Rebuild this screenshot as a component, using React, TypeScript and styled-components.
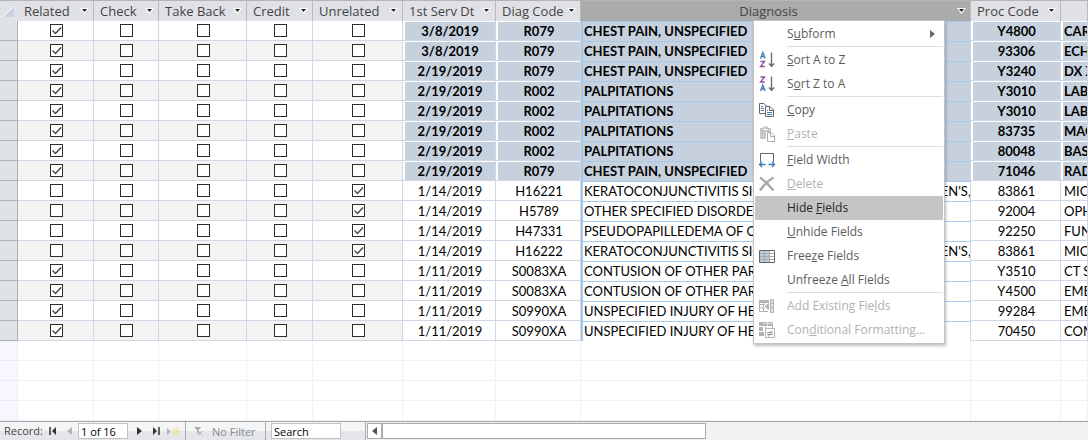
import React from 'react';
import styled, { createGlobalStyle } from 'styled-components';

const Global = createGlobalStyle`
  * { box-sizing: border-box; }
  body { margin: 0; background: #fff; font-family: "Open Sans", "Noto Sans", sans-serif; font-size: 12px; }
  button, input { font: inherit; color: inherit; margin: 0; padding: 0; border: 0; background: none; }
`;

const Page = styled.div`
  display: flex;
  flex-direction: column;
  min-height: 100vh;
  overflow: hidden;
`;

const SheetArea = styled.main`
  flex: 1;
  min-width: 0;
`;

const Sheet = styled.table`
  width: 100%;
  table-layout: fixed;
  border-collapse: separate;
  border-spacing: 0;
`;

const Col = styled.col<{ $w?: number }>`
  width: ${(p) => (p.$w ? `${p.$w}px` : 'auto')};
`;

const Corner = styled.th`
  height: 21px;
  padding: 0;
  border-top: 1px solid #b4b4b8;
  background: #dfe3e8;
  svg { display: block; margin-left: 3px; }
`;

const HeadCell = styled.th<{ $active?: boolean }>`
  position: relative;
  height: 21px;
  padding: 0;
  border-top: 1px solid #b4b4b8;
  border-right: 1px solid #b9babe;
  background: ${(p) => (p.$active ? '#ababab' : '#dfe1e7')};
  color: #444;
  font-size: 13px;
  font-weight: 400;
  line-height: 20px;
`;

const HeadInner = styled.div<{ $center?: boolean }>`
  display: flex;
  align-items: center;
  height: 20px;
  padding: 0 3px 0 ${(p) => (p.$center ? 0 : 6)}px;
  white-space: nowrap;
`;

const HeadLabel = styled.span<{ $center?: boolean }>`
  flex: 1;
  text-align: ${(p) => (p.$center ? 'center' : 'left')};
`;

const DropButton = styled.button`
  display: flex;
  align-items: center;
  justify-content: center;
  width: 11px;
  height: 16px;
`;

const RowHead = styled.th<{ $empty?: boolean }>`
  height: 20px;
  padding: 0;
  border-right: 1px solid ${(p) => (p.$empty ? '#ececf4' : '#b0b0b4')};
  border-bottom: 1px solid ${(p) => (p.$empty ? '#ececf4' : '#b0b0b4')};
  background: ${(p) => (p.$empty ? '#f7f7ff' : '#dfe3e8')};
`;

const Cell = styled.td<{ $alt?: boolean }>`
  height: 20px;
  padding: 0 0 0 1px;
  border-right: 1px solid #cfd6e5;
  border-bottom: 1px solid #cfd6e5;
  background: ${(p) => (p.$alt ? '#f3f3f3' : '#fff')};
  line-height: 0;
  text-align: center;
`;

const TextCell = styled(Cell)<{ $marked?: boolean; $left?: boolean }>`
  padding: 1px 0 0 2px;
  background: #fff;
  color: #000;
  font-family: Lato, "Liberation Sans", sans-serif;
  font-size: 13px;
  font-weight: ${(p) => (p.$marked ? 700 : 400)};
  line-height: 18px;
  text-align: ${(p) => (p.$left ? 'left' : 'center')};
`;

const Fill = styled.div<{ $marked?: boolean; $left?: boolean }>`
  height: 18px;
  padding-left: ${(p) => (p.$left ? 1 : 0)}px;
  overflow: hidden;
  white-space: nowrap;
  background: ${(p) => (p.$marked ? '#c6d1dd' : '#fff')};
`;

const ActiveCell = styled(TextCell)`
  padding: 0;
  border-left: 2px solid #9fc8ea;
  border-top: 1px solid #a6cbea;
  border-bottom: 0;
  ${Fill} { height: 19px; }
`;

const EmptyCell = styled.td`
  height: 20px;
  padding: 0;
  border-right: 1px solid #f0f0f6;
  border-bottom: 1px solid #f0f0f6;
`;

const Tick = styled.input`
  appearance: none;
  display: inline-block;
  width: 13px;
  height: 13px;
  border: 1px solid #2b2b2b;
  background: #fff;
  &:checked {
    background: #fff url("data:image/svg+xml,%3Csvg xmlns='http://www.w3.org/2000/svg' width='11' height='11'%3E%3Cpath d='M1.5 5.5L4.5 8.5L10 2.5' fill='none' stroke='%23444' stroke-width='1.4'/%3E%3C/svg%3E") no-repeat;
  }
`;

const Menu = styled.div`
  position: absolute;
  z-index: 2;
  top: 19px;
  left: 172px;
  width: 192px;
  padding: 1px;
  border: 1px solid #c3c3c3;
  background: #fff;
  box-shadow: 1px 2px 3px rgba(0, 0, 0, 0.25);
  text-align: left;
`;

const MenuItem = styled.button<{ $hot?: boolean }>`
  display: flex;
  align-items: center;
  width: 100%;
  height: 24px;
  background: ${(p) => (p.$hot ? '#c5c5c5' : 'transparent')};
  color: ${(p) => (p.$hot ? '#262626' : '#5c5c5c')};
  font-size: 12px;
  line-height: 24px;
  text-align: left;
  white-space: nowrap;
  &:disabled { color: #b1b1b1; }
`;

const MenuIcon = styled.span`
  display: flex;
  width: 32px;
  padding-left: 3px;
  svg { display: block; }
`;

const MenuText = styled.span`
  flex: 1;
`;

const SubArrow = styled.svg`
  margin-right: 8px;
`;

const Divider = styled.hr`
  height: 1px;
  margin: 0 0 1px 32px;
  border: 0;
  background: #dcdfe2;
`;

const NavBar = styled.footer`
  display: flex;
  align-items: stretch;
  height: 19px;
  border-top: 1px solid #a5a7ac;
  background: #eff0f2;
  color: #444;
  font-size: 11px;
`;

const NavGroup = styled.div`
  display: flex;
  align-items: center;
  border-right: 1px solid #a9abb0;
  background: linear-gradient(#f4f5f6 0 50%, #e4e6ea 50% 100%);
`;

const RecordGroup = styled(NavGroup)`
  width: 186px;
  padding-left: 4px;
`;

const FilterGroup = styled(NavGroup)`
  width: 80px;
  padding-left: 8px;
`;

const SearchGroup = styled(NavGroup)`
  width: 100px;
  padding-left: 5px;
`;

const RecordLabel = styled.label`
  width: 42px;
  line-height: 16px;
`;

const NavButton = styled.button<{ $w: number }>`
  display: flex;
  align-items: center;
  justify-content: center;
  width: ${(p) => p.$w}px;
  height: 16px;
`;

const FilterButton = styled.button`
  display: flex;
  align-items: center;
  gap: 9px;
  white-space: nowrap;
  &:disabled { color: #8a8a8a; }
`;

const NavInput = styled.input<{ $w: number }>`
  && {
    width: ${(p) => p.$w}px;
    height: 16px;
    padding-left: 2px;
    border: 1px solid #c3c3c3;
    background: #fff;
    color: #000;
    line-height: 14px;
  }
  &::placeholder { color: #000; opacity: 1; }
`;

const ScrollBar = styled.div`
  display: flex;
  flex: 1;
  margin: 1px 0;
  padding-left: 1px;
  background: #f2f2f2;
`;

const ScrollButton = styled.button`
  && {
    display: flex;
    align-items: center;
    justify-content: center;
    width: 15px;
    border: 1px solid #ababab;
    background: #fff;
  }
`;

const Thumb = styled.div`
  width: 46%;
  max-width: 324px;
  border: 1px solid #ababab;
  background: #fff;
`;

const checkColumns = ['Related', 'Check', 'Take Back', 'Credit', 'Unrelated'];

type Row = [number, string, string, string, string, string];

const rows: Row[] = [
  [0, '3/8/2019', 'R079', 'CHEST PAIN, UNSPECIFIED', 'Y4800', 'CARDIO'],
  [0, '3/8/2019', 'R079', 'CHEST PAIN, UNSPECIFIED', '93306', 'ECHO'],
  [0, '2/19/2019', 'R079', 'CHEST PAIN, UNSPECIFIED', 'Y3240', 'DX XRAY'],
  [0, '2/19/2019', 'R002', 'PALPITATIONS', 'Y3010', 'LAB,'],
  [0, '2/19/2019', 'R002', 'PALPITATIONS', 'Y3010', 'LAB,'],
  [0, '2/19/2019', 'R002', 'PALPITATIONS', '83735', 'MAGN'],
  [0, '2/19/2019', 'R002', 'PALPITATIONS', '80048', 'BASIC'],
  [0, '2/19/2019', 'R079', 'CHEST PAIN, UNSPECIFIED', '71046', 'RADEX'],
  [4, '1/14/2019', 'H16221', "KERATOCONJUNCTIVITIS SICCA, NOT SPECIFIED AS SJOGREN'S, RIGHT EYE", '83861', 'MICRO'],
  [4, '1/14/2019', 'H5789', 'OTHER SPECIFIED DISORDERS OF EYE', '92004', 'OPHTH'],
  [4, '1/14/2019', 'H47331', 'PSEUDOPAPILLEDEMA OF OPTIC DISC', '92250', 'FUNDUS'],
  [4, '1/14/2019', 'H16222', "KERATOCONJUNCTIVITIS SICCA, NOT SPECIFIED AS SJOGREN'S, LEFT EYE", '83861', 'MICRO'],
  [0, '1/11/2019', 'S0083XA', 'CONTUSION OF OTHER PART OF HEAD', 'Y3510', 'CT SCAN'],
  [0, '1/11/2019', 'S0083XA', 'CONTUSION OF OTHER PART OF HEAD', 'Y4500', 'EMERG'],
  [0, '1/11/2019', 'S0990XA', 'UNSPECIFIED INJURY OF HEAD', '99284', 'EMERG'],
  [0, '1/11/2019', 'S0990XA', 'UNSPECIFIED INJURY OF HEAD', '70450', 'COMPUTED'],
];

const SortIcon = ({ desc }: { desc?: boolean }) => {
  const a = (y: number) => <path d={`M2.5 ${y + 6}L4.8 ${y}L7.1 ${y + 6}M3.2 ${y + 4}H6.4`} stroke="#3d7cb8" strokeWidth="1.3" />;
  const z = (y: number) => <path d={`M2.5 ${y + 0.5}H6.5L2.5 ${y + 5.5}H6.8`} stroke="#8b4fa8" strokeWidth="1.3" />;
  return (
    <svg width="18" height="18" viewBox="0 0 18 18" fill="none">
      {desc ? z(1.5) : a(1.5)}
      {desc ? a(10) : z(10)}
      <path d="M13.5 1.5V15M11 12.5L13.5 15.2L16 12.5" stroke="#666" strokeWidth="1.3" />
    </svg>
  );
};

const CopyIcon = () => (
  <svg width="18" height="18" viewBox="0 0 18 18" fill="none" stroke="#666">
    <path d="M7 12.5H1.5V2.5H6L8.5 5" />
    <path d="M7.5 5.5H12L15.5 9V15.5H7.5Z" fill="#fff" />
    <path d="M11.5 5.5V9.5H15.5" />
    <path d="M3 5.5H5M3 7.5H6M3 9.5H6M9 9.5H10M9 11.5H14M9 13.5H14" stroke="#3d7cb8" />
  </svg>
);

const PasteIcon = () => (
  <svg width="18" height="18" viewBox="0 0 18 18" fill="none">
    <path d="M2 3H5V1.5H10V3H13V7H8V14H2Z" fill="#c6c6c6" />
    <path d="M5.5 4.5H9.5" stroke="#fff" />
    <path d="M9.5 7.5H13L16.5 11V16.5H9.5Z" fill="#fff" stroke="#aaa" />
    <path d="M12.5 7.5V11.5H16.5" stroke="#aaa" />
  </svg>
);

const WidthIcon = () => (
  <svg width="18" height="18" viewBox="0 0 18 18" fill="none">
    <path d="M2.5 11V2.5H15.5V11" stroke="#666" />
    <path d="M1.5 13.5H7.5M4 11L1.5 13.5L4 16M10.5 13.5H16.5M14 11L16.5 13.5L14 16" stroke="#3d7cb8" strokeWidth="1.3" />
  </svg>
);

const DeleteIcon = () => (
  <svg width="18" height="18" viewBox="0 0 18 18" fill="none">
    <path d="M2 2.5C7 6 12 11 15.5 15.5M15.5 2.5C9.5 6 5 11 2 15.5" stroke="#a9a9a9" strokeWidth="2.4" />
  </svg>
);

const FreezeIcon = () => (
  <svg width="18" height="18" viewBox="0 0 18 18" fill="none">
    <path d="M1.5 3.5H16.5V15.5H1.5Z" fill="#fff" />
    <path d="M2 4H11V15H2Z" fill="#b8cde4" />
    <path d="M2 6.5H16M2 9.5H16M2 12.5H16M6.5 4V15M11.5 4V15" stroke="#aaa" />
    <path d="M1.5 3.5H16.5V15.5H1.5Z" stroke="#666" />
  </svg>
);

const AddFieldsIcon = () => (
  <svg width="18" height="18" viewBox="0 0 18 18" fill="none" stroke="#b3b3b3">
    <path d="M10 14.5H1.5V3.5M1.5 7.5H7M1.5 11H7M5.5 4V14" />
    <path d="M1 3H11V6H1Z" fill="#b3b3b3" stroke="none" />
    <path d="M7 9H10.5M10.5 6.5V12.5L7.5 9.5Z" fill="#b3b3b3" />
    <path d="M12.5 2.5H15.5V15.5H12.5Z" fill="#ddd" />
    <path d="M12.5 6.5H15.5M12.5 10.5H15.5" />
  </svg>
);

const FormatIcon = () => (
  <svg width="18" height="18" viewBox="0 0 18 18" fill="none" stroke="#b3b3b3">
    <path d="M1 1H15V5H1ZM1 6H5V10H1ZM1 11H6V15H1Z" fill="#b3b3b3" stroke="none" />
    <path d="M9.5 1V5M5 2.5H15" stroke="#ddd" />
    <path d="M7.5 5.5V7.500M14.500 5V7" />
    <path d="M7.5 7.5H16.5V16.5H7.5Z" fill="#fff" />
    <path d="M9 11.5H15M9 13.5H15M13.5 9.5L10.5 15.5" stroke="#999" />
  </svg>
);

type Entry = { pre: string; key: string; post: string; icon?: React.ReactNode; off?: boolean; hot?: boolean; sub?: boolean; line?: boolean };

const entries: Entry[] = [
  { pre: 'S', key: 'u', post: 'bform', sub: true, line: true },
  { pre: '', key: 'S', post: 'ort A to Z', icon: <SortIcon /> },
  { pre: 'S', key: 'o', post: 'rt Z to A', icon: <SortIcon desc />, line: true },
  { pre: '', key: 'C', post: 'opy', icon: <CopyIcon /> },
  { pre: '', key: 'P', post: 'aste', icon: <PasteIcon />, off: true, line: true },
  { pre: '', key: 'F', post: 'ield Width', icon: <WidthIcon /> },
  { pre: '', key: 'D', post: 'elete', icon: <DeleteIcon />, off: true },
  { pre: 'Hide ', key: 'F', post: 'ields', hot: true },
  { pre: '', key: 'U', post: 'nhide Fields' },
  { pre: 'Free', key: 'z', post: 'e Fields', icon: <FreezeIcon /> },
  { pre: 'Unfreeze ', key: 'A', post: 'll Fields', line: true },
  { pre: 'Add Existing Fie', key: 'l', post: 'ds', icon: <AddFieldsIcon />, off: true },
  { pre: 'Con', key: 'd', post: 'itional Formatting...', icon: <FormatIcon />, off: true },
];

const ContextMenu = () => (
  <Menu role="menu">
    {entries.map((e) => (
      <React.Fragment key={e.pre + e.key + e.post}>
        <MenuItem role="menuitem" disabled={e.off} $hot={e.hot}>
          <MenuIcon>{e.icon}</MenuIcon>
          <MenuText>{e.pre}<u>{e.key}</u>{e.post}</MenuText>
          {e.sub && <SubArrow width="5" height="8"><path d="M0 0L5 4L0 8Z" fill="#666" /></SubArrow>}
        </MenuItem>
        {e.line && <Divider />}
      </React.Fragment>
    ))}
  </Menu>
);

const Header = ({ name, center, active, children }: { name: string; center?: boolean; active?: boolean; children?: React.ReactNode }) => (
  <HeadCell scope="col" $active={active}>
    <HeadInner $center={center}>
      <HeadLabel $center={center}>{name}</HeadLabel>
      <DropButton aria-label={`${name} options`}>
        <svg width="9" height="6"><path d="M0 0H9L4.5 6Z" fill="#fff" /><path d="M2 1H7L4.5 4Z" fill="#222" /></svg>
      </DropButton>
    </HeadInner>
    {children}
  </HeadCell>
);

const widths = [18, 76, 65, 88, 66, 90, 93, 85, 390, 90];

export default function App() {
  return (
    <Page>
      <Global />
      <SheetArea>
        <Sheet>
          <colgroup>
            {widths.map((w, i) => <Col key={i} $w={w} />)}
            <Col />
          </colgroup>
          <thead>
            <tr>
              <Corner><svg width="11" height="11"><path d="M11 0V11H0Z" fill="#c9d2e2" /><path d="M0 11L11 0" stroke="#fff" /></svg></Corner>
              {checkColumns.map((c) => <Header key={c} name={c} />)}
              <Header name="1st Serv Dt" />
              <Header name="Diag Code" />
              <Header name="Diagnosis" center active><ContextMenu /></Header>
              <Header name="Proc Code" />
              <HeadCell />
            </tr>
          </thead>
          <tbody>
            {rows.map(([flag, date, diag, text, proc, desc], i) => {
              const marked = i < 8;
              return (
                <tr key={i}>
                  <RowHead scope="row" />
                  {checkColumns.map((c, k) => (
                    <Cell key={c} $alt={i % 2 === 1}>
                      <Tick type="checkbox" aria-label={`${c}, record ${i + 1}`} defaultChecked={k === flag} />
                    </Cell>
                  ))}
                  <TextCell $marked={marked}><Fill $marked={marked}>{date}</Fill></TextCell>
                  <TextCell $marked={marked}><Fill $marked={marked}>{diag}</Fill></TextCell>
                  <ActiveCell $marked={marked} $left><Fill $marked={marked} $left>{text}</Fill></ActiveCell>
                  <TextCell $marked={marked}><Fill $marked={marked}>{proc}</Fill></TextCell>
                  <TextCell $marked={marked} $left><Fill $marked={marked} $left>{desc}</Fill></TextCell>
                </tr>
              );
            })}
            {[0, 1, 2, 3].map((r) => (
              <tr key={r}>
                <RowHead $empty />
                {widths.map((_, k) => <EmptyCell key={k} />)}
              </tr>
            ))}
          </tbody>
        </Sheet>
      </SheetArea>
      <NavBar>
        <RecordGroup>
          <RecordLabel htmlFor="record">Record:</RecordLabel>
          <NavButton $w={14} aria-label="First record"><svg width="8" height="8"><path d="M1 0V8" stroke="#333" strokeWidth="1.5" /><path d="M7 0V8L3 4Z" fill="#333" /></svg></NavButton>
          <NavButton $w={18} aria-label="Previous record"><svg width="5" height="8"><path d="M5 0V8L0 4Z" fill="#b5b5b5" /></svg></NavButton>
          <NavInput id="record" $w={50} defaultValue="1 of 16" />
          <NavButton $w={22} aria-label="Next record"><svg width="5" height="8"><path d="M0 0V8L5 4Z" fill="#333" /></svg></NavButton>
          <NavButton $w={12} aria-label="Last record"><svg width="8" height="8"><path d="M7 0V8" stroke="#333" strokeWidth="1.5" /><path d="M1 0V8L5 4Z" fill="#333" /></svg></NavButton>
          <NavButton $w={22} aria-label="New record"><svg width="13" height="9"><path d="M0 1V8L4 4.5Z" fill="#b5b5b5" /><path d="M9 0V9M5 4.5H13M6 1.5L12 7.5M12 1.5L6 7.5" stroke="#f0e2a8" strokeWidth="1.2" /></svg></NavButton>
        </RecordGroup>
        <FilterGroup>
          <FilterButton disabled>
            <svg width="9" height="9" fill="none"><path d="M0 0H7L4.5 3V7L3 6V3Z" fill="#aaa" /><path d="M4 4L8.5 8.5M8.5 4L4 8.5" stroke="#aaa" /></svg>
            No Filter
          </FilterButton>
        </FilterGroup>
        <SearchGroup>
          <NavInput $w={70} aria-label="Search" placeholder="Search" />
        </SearchGroup>
        <ScrollBar>
          <ScrollButton aria-label="Scroll left"><svg width="5" height="8"><path d="M5 0V8L0 4Z" fill="#555" /></svg></ScrollButton>
          <Thumb />
        </ScrollBar>
      </NavBar>
    </Page>
  );
}
